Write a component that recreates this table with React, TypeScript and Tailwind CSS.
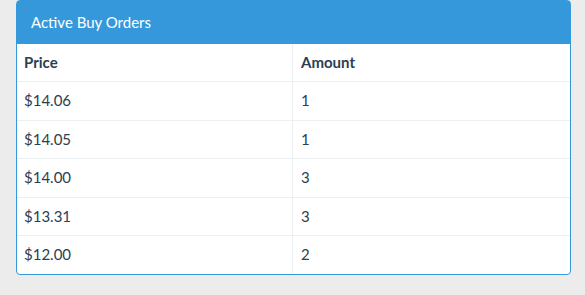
import React from 'react';

interface Order {
  price: string;
  amount: number;
}

const orders: Order[] = [
  { price: '$14.06', amount: 1 },
  { price: '$14.05', amount: 1 },
  { price: '$14.00', amount: 3 },
  { price: '$13.31', amount: 3 },
  { price: '$12.00', amount: 2 },
];

const App: React.FC = () => {
  return (
    <div className="min-h-[295px] bg-[#ececec] pl-4 pr-[14px] font-['Lato','Liberation_Sans',sans-serif] text-[15px] text-[#2c3e50]">
      <div className="rounded-[4px] border border-[#3498db] bg-white">
        {/* Heading */}
        <div className="flex h-[43px] items-center bg-[#3498db] px-[14px] text-white">
          Active Buy Orders
        </div>

        {/* Orders table */}
        <div className="grid grid-cols-[276px_1fr]">
          <div className="border-r border-[#ecf0f1] px-[7px] py-2 leading-[21px] font-bold">Price</div>
          <div className="px-2 py-2 leading-[21px] font-bold">Amount</div>
          {orders.map((order, index) => (
            <React.Fragment key={index}>
              <div className="border-t border-r border-[#ecf0f1] px-[7px] pt-[8px] pb-[8.5px] leading-[21px]">
                {order.price}
              </div>
              <div className="border-t border-[#ecf0f1] px-2 pt-[8px] pb-[8.5px] leading-[21px]">
                {order.amount}
              </div>
            </React.Fragment>
          ))}
        </div>
      </div>
    </div>
  );
};

export default App;
